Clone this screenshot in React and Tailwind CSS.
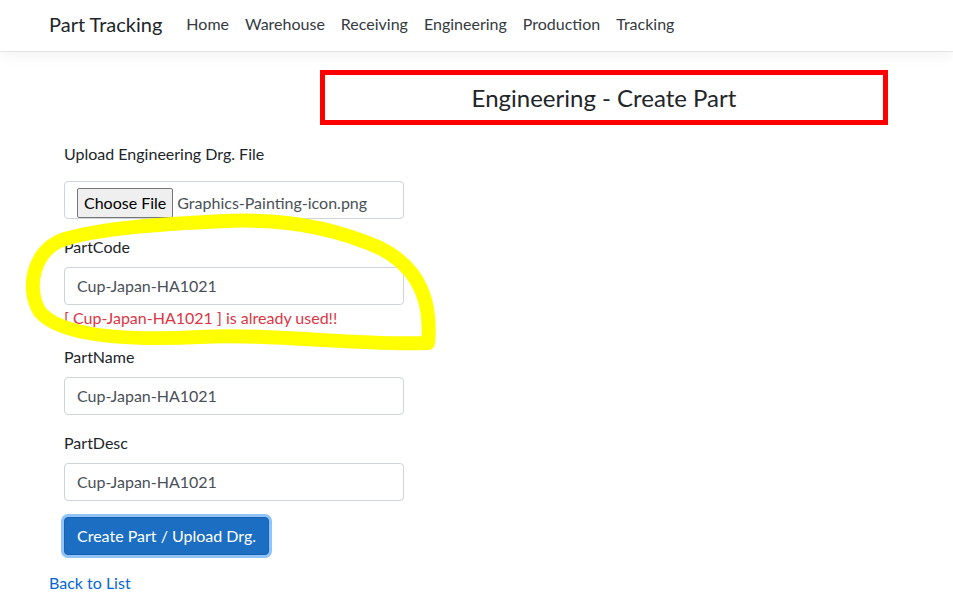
import React from 'react';

const navLinks = ['Home', 'Warehouse', 'Receiving', 'Engineering', 'Production', 'Tracking'];

const Field = ({ label, value, error }) => (
    <div className="mb-4">
        <label className="block leading-6 mb-2">{label}</label>
        <div className="h-[38px] border border-[#ced4da] rounded px-3 flex items-center text-[#495057] bg-white">
            {value}
        </div>
        {error && <div className="leading-6 text-[#dc3545] -mb-px mt-px">{error}</div>}
    </div>
);

const App = () => {
    return (
        <div className="relative min-h-screen w-full bg-white text-[#212529] text-base" style={{ fontFamily: 'Lato, "Open Sans", sans-serif' }}>
            {/* Navbar */}
            <nav className="h-[52px] border-b border-[#e5e5e5] shadow-[0_4px_12px_rgba(0,0,0,0.05)] flex items-center pb-[3px] pl-[49px]">
                <span className="text-[20px] mr-[16px]">Part Tracking</span>
                <ul className="flex">
                    {navLinks.map((l) => (
                        <li key={l} className="px-2 text-[#343a40]">{l}</li>
                    ))}
                </ul>
            </nav>

            <div className="pl-[49px] pt-[18px]">
                {/* Title with red annotation box */}
                <div className="ml-[271px] w-[568px] h-[55px] border-[5px] border-[#ff0000] flex items-center justify-center text-[24px]">
                    Engineering - Create Part
                </div>

                <div className="pl-[15px] w-[355px] mt-[17px]">
                    <div className="mb-[16px]">
                        <label className="block leading-6 mb-[15px]">Upload Engineering Drg. File</label>
                        <div className="h-[38px] border border-[#ced4da] rounded pl-3 flex items-end">
                            <span className="h-[30px] px-[6px] border border-[#767676] rounded-[2px] bg-[#efefef] text-black flex items-center">Choose File</span>
                            <span className="ml-1 h-[30px] flex items-center text-[#495057]">Graphics-Painting-icon.png</span>
                        </div>
                    </div>

                    <Field label="PartCode" value="Cup-Japan-HA1021" error="[ Cup-Japan-HA1021 ] is already used!!" />
                    <Field label="PartName" value="Cup-Japan-HA1021" />
                    <Field label="PartDesc" value="Cup-Japan-HA1021" />

                    <button className="h-[38px] px-3 bg-[#1b6ec2] border border-[#1861ac] text-white rounded ring-[3px] ring-[#91c2f9]">
                        Create Part / Upload Drg.
                    </button>
                </div>

                <a href="/" className="block mt-[16px] leading-6 text-[#0366d6]">Back to List</a>
            </div>

            {/* Yellow highlighter scribble */}
            <svg className="absolute inset-0 pointer-events-none" width="953" height="602">
                <path
                    d="M428 343 C432 302 420 268 380 248 C340 230 290 218 225 221 C160 224 100 228 62 240 C32 252 26 290 40 312 C60 335 120 341 200 337 C270 333 360 346 428 343"
                    fill="none"
                    stroke="#ffff00"
                    strokeWidth="14"
                    strokeLinecap="round"
                    strokeLinejoin="round"
                />
            </svg>
        </div>
    );
};

export default App;
